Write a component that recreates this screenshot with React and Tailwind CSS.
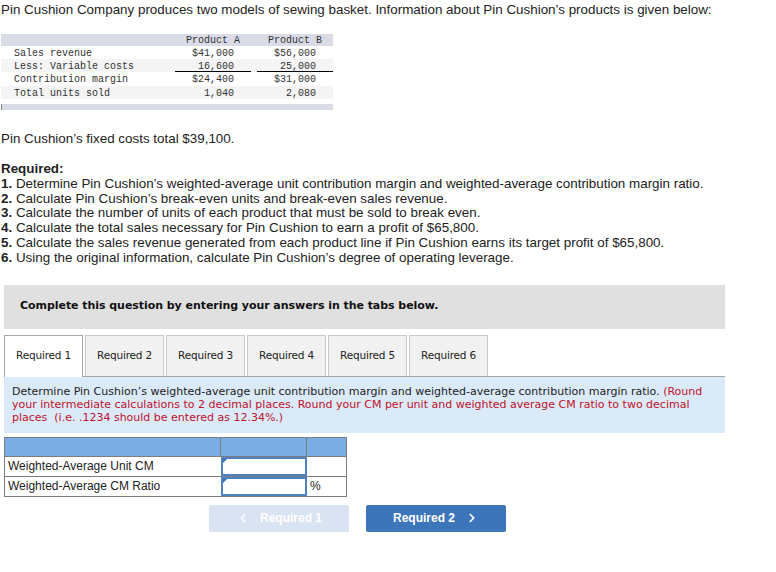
import React from 'react';
import { ChevronLeft, ChevronRight } from 'lucide-react';

const ROWS = [
  { label: 'Sales revenue', a: '$41,000', b: '$56,000', h: 'h-[13px]', bg: '' },
  { label: 'Less: Variable costs', a: '16,600', b: '25,000', h: 'h-[13px]', bg: 'bg-[#f4f4f4]', line: true },
  { label: 'Contribution margin', a: '$24,400', b: '$31,000', h: 'h-[14px]', bg: '' },
  { label: 'Total units sold', a: '1,040', b: '2,080', h: 'h-[13px]', bg: 'bg-[#f4f4f4]' },
];

const STEPS = [
  "Determine Pin Cushion’s weighted-average unit contribution margin and weighted-average contribution margin ratio.",
  "Calculate Pin Cushion’s break-even units and break-even sales revenue.",
  "Calculate the number of units of each product that must be sold to break even.",
  "Calculate the total sales necessary for Pin Cushion to earn a profit of $65,800.",
  "Calculate the sales revenue generated from each product line if Pin Cushion earns its target profit of $65,800.",
  "Using the original information, calculate Pin Cushion’s degree of operating leverage.",
];

const TABS = ['Required 1', 'Required 2', 'Required 3', 'Required 4', 'Required 5', 'Required 6'];

function InputCell() {
  return (
    <div className="relative w-[86px] h-full border-2 border-[#4f80c0] bg-white">
      <div className="absolute left-0 top-0 w-0 h-0 border-t-[4px] border-t-[#2f6db5] border-r-[4px] border-r-transparent" />
    </div>
  );
}

export default function App() {
  return (
    <div className="w-[776px] h-[572px] bg-white text-[#222] overflow-hidden" style={{ fontFamily: '"Liberation Sans", Arial, sans-serif' }}>
      <p className="pl-px pt-[2px] text-[13.4px] leading-[16px]">
        Pin Cushion Company produces two models of sewing basket. Information about Pin Cushion’s products is given below:
      </p>

      {/* product table */}
      <div className="ml-px mt-[16px] w-[332px] text-[10px] text-[#333]" style={{ fontFamily: '"Liberation Mono", monospace' }}>
        <div className="flex h-[12px] leading-[13px] bg-[#d9dce6]">
          <div className="w-[174px]" />
          <div className="w-[76px] text-center">Product A</div>
          <div className="w-[6px]" />
          <div className="w-[76px] text-center">Product B</div>
        </div>
        {ROWS.map((r) => (
          <div key={r.label} className={`flex ${r.h} leading-[15px] ${r.bg}`}>
            <div className="w-[174px] pl-[13px]">{r.label}</div>
            <div className={`w-[76px] text-right pr-[17px] ${r.line ? 'border-b border-black' : ''}`}>{r.a}</div>
            <div className="w-[6px]" />
            <div className={`w-[76px] text-right pr-[17px] ${r.line ? 'border-b border-black' : ''}`}>{r.b}</div>
          </div>
        ))}
        <div className="mt-[5px] h-[6px] bg-[#d9dce6] border-l border-[#8a8a8a]" />
      </div>

      <p className="pl-px mt-[21px] text-[13.4px] leading-[16px]">Pin Cushion’s fixed costs total $39,100.</p>

      <div className="pl-px mt-[15px] text-[13.4px] leading-[14.8px]">
        <p className="font-bold">Required:</p>
        {STEPS.map((s, i) => (
          <p key={i}><span className="font-bold">{i + 1}.</span> {s}</p>
        ))}
      </div>

      <div style={{ fontFamily: '"DejaVu Sans", Verdana, sans-serif' }}>
        <div className="ml-[4px] mt-[19px] w-[721px] h-[44px] bg-[#e0e0e0] flex items-center pl-[16px]">
          <p className="text-[11px] font-bold text-[#111] tracking-[-0.05px]">Complete this question by entering your answers in the tabs below.</p>
        </div>

        <div className="ml-[4px] mt-[7px] w-[721px] flex items-end border-b border-[#a6a6a6] h-[41px]">
          {TABS.map((t, i) => (
            <div
              key={t}
              className={`w-[79px] mr-[2px] flex items-center justify-center text-[10.5px] tracking-[-0.2px] text-[#222] ${
                i === 0 ? 'bg-white border border-b-0 border-[#a6a6a6] -mb-px h-[42px]' : 'bg-[#f1f1f1] border border-b-0 border-[#c9c9c9] h-[41px]'
              }`}
            >
              {t}
            </div>
          ))}
        </div>

        <div className="ml-[4px] w-[721px] h-[56px] bg-[#dbeaf8] px-[8px] pt-[8px] text-[11px] leading-[13px] text-[#222]">
          Determine Pin Cushion’s weighted-average unit contribution margin and weighted-average contribution margin ratio.{' '}
          <span className="text-[#c0102a]">
            (Round your intermediate calculations to 2 decimal places. Round your CM per unit and weighted average CM ratio to two decimal places&nbsp; (i.e. .1234 should be entered as 12.34%.)
          </span>
        </div>
      </div>

      {/* answer table */}
      <div className="ml-[4px] mt-[4px] w-[343px] border border-[#7d7d7d] text-[12px] text-[#222]">
        <div className="flex h-[19px] bg-[#7aade3] border-b border-[#7d7d7d]">
          <div className="w-[216px] border-r border-[#7d7d7d]" />
          <div className="w-[86px] border-r border-[#7d7d7d]" />
          <div className="flex-1" />
        </div>
        <div className="flex h-[20px] border-b border-[#7d7d7d]">
          <div className="w-[216px] pl-[3px] leading-[19px]">Weighted-Average Unit CM</div>
          <InputCell />
          <div className="flex-1" />
        </div>
        <div className="flex h-[19px]">
          <div className="w-[216px] pl-[3px] leading-[19px]">Weighted-Average CM Ratio</div>
          <InputCell />
          <div className="flex-1 pl-[3px] leading-[19px]">%</div>
        </div>
      </div>

      <div className="mt-[8px] flex gap-[17px] pl-[209px] text-[12px] font-bold text-white">
        <div className="w-[140px] h-[27px] rounded-[2px] bg-[#d9e3f1] flex items-center justify-center gap-[10px]">
          <ChevronLeft size={14} strokeWidth={3} />
          <span>Required 1</span>
        </div>
        <div className="w-[140px] h-[27px] rounded-[2px] bg-[#3c75ba] flex items-center justify-center gap-[10px]">
          <span>Required 2</span>
          <ChevronRight size={14} strokeWidth={3} />
        </div>
      </div>
    </div>
  );
}
